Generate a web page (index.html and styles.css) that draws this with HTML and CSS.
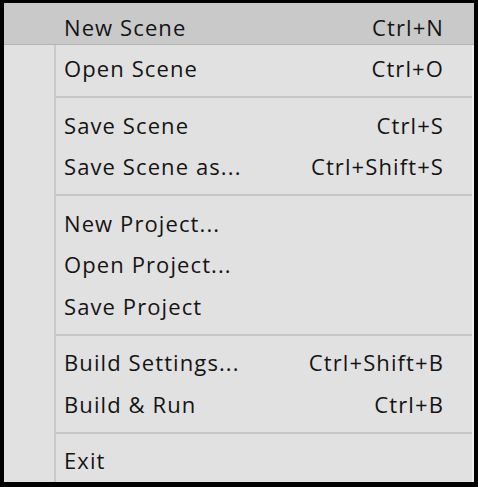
FILE: index.html
```html
<!DOCTYPE html>
<html>
<head>
<meta charset="utf-8">
<link rel="stylesheet" href="styles.css">
</head>
<body>
<div class="menu">
  <div class="item active"><span class="label">New Scene</span><span class="key">Ctrl+N</span></div>
  <div class="item"><span class="label">Open Scene</span><span class="key">Ctrl+O</span></div>
  <div class="sep"></div>
  <div class="item"><span class="label">Save Scene</span><span class="key">Ctrl+S</span></div>
  <div class="item"><span class="label">Save Scene as...</span><span class="key">Ctrl+Shift+S</span></div>
  <div class="sep"></div>
  <div class="item"><span class="label">New Project...</span></div>
  <div class="item"><span class="label">Open Project...</span></div>
  <div class="item"><span class="label">Save Project</span></div>
  <div class="sep"></div>
  <div class="item"><span class="label">Build Settings...</span><span class="key">Ctrl+Shift+B</span></div>
  <div class="item"><span class="label">Build &amp; Run</span><span class="key">Ctrl+B</span></div>
  <div class="sep"></div>
  <div class="item"><span class="label">Exit</span></div>
</div>
</body>
</html>
```
FILE: styles.css
```css
html, body {
  margin: 0;
  padding: 0;
  background: #000;
}

.menu {
  box-sizing: border-box;
  width: 478px;
  height: 487px;
  border-top: 3px solid #000;
  border-left: 4px solid #000;
  border-right: 4px solid #000;
  border-bottom: 5px solid #000;
  background-color: #e1e1e1;
  background-image: linear-gradient(to right, transparent 50px, #c9c9c9 50px, #c9c9c9 52px, transparent 52px);
  box-shadow: inset -2px 0 0 #efefef;
  display: flex;
  flex-direction: column;
  font-family: "Open Sans", "Noto Sans", sans-serif;
  font-size: 22px;
  font-weight: 500;
  letter-spacing: 1.1px;
  color: #141414;
}

.item {
  box-sizing: border-box;
  height: 41.5px;
  padding: 8.5px 30px 0 60px;
  line-height: 30px;
  display: flex;
  justify-content: space-between;
  white-space: nowrap;
  flex: none;
}

.item.active {
  background-color: #c9c9c9;
  border-bottom: 1px solid #b4b4b4;
}

.sep {
  flex: none;
  box-sizing: border-box;
  height: 15px;
  padding-top: 10px;
  margin-left: 52px;
  margin-right: 2px;
}

.sep::before {
  content: "";
  display: block;
  height: 2px;
  background: #c6c6c6;
}
```
